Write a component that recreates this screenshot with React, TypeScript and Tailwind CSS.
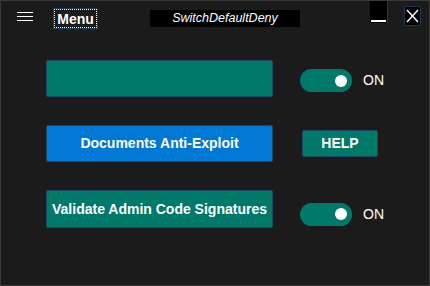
import React from 'react';

function Toggle() {
  return (
    <div className="flex items-center gap-[11px]">
      <div className="w-[52px] h-[23px] rounded-full bg-[#00786a] flex items-center justify-end pr-[5px]">
        <div className="w-3 h-3 rounded-full bg-white" />
      </div>
      <span className="text-[14px] text-white">ON</span>
    </div>
  );
}

export default function App() {
  return (
    <div
      className="w-[430px] h-[286px] bg-[#1b1b1b] border border-[#3a3a3a] flex flex-col overflow-hidden"
      style={{ fontFamily: '"Liberation Sans", Arial, sans-serif' }}
    >
      {/* title bar */}
      <div className="h-[36px] flex items-start shrink-0">
        <div className="ml-[16px] mt-[11px] w-4 flex flex-col gap-[3px]">
          <div className="h-px bg-white" />
          <div className="h-px bg-white" />
          <div className="h-px bg-white" />
        </div>
        <div className="ml-[20px] mt-[7px] h-[21px] w-[45px] border border-[#1d3a58] flex items-center justify-center outline-1 outline-dotted outline-white outline-offset-[-2px]">
          <span className="text-[14px] font-bold text-white leading-none">Menu</span>
        </div>
        <div className="ml-[52px] mt-[9px] h-[17px] w-[150px] bg-black flex items-center justify-center">
          <span className="text-[12.5px] italic text-white leading-none">SwitchDefaultDeny</span>
        </div>
        <div className="ml-[70px] -mt-px h-[23px] w-[18px] bg-black border-r border-[#1d3a58] flex items-end justify-center pb-[1px]">
          <div className="w-[15px] h-[2px] bg-white" />
        </div>
        <div className="ml-[16px] mt-[5px] h-[20px] w-[17px] bg-black border border-[#1d3a58] rounded-[2px] flex items-center justify-center">
          <svg width="13" height="14" viewBox="0 0 13 14">
            <path d="M1 1 L12 13 M12 1 L1 13" stroke="white" strokeWidth="1.4" fill="none" />
          </svg>
        </div>
      </div>

      {/* content */}
      <div className="flex flex-col pl-[45px] pt-[23px] gap-[28px]">
        <div className="flex items-center">
          <div className="w-[227px] h-[37px] rounded-[2px] bg-[#00786a] border border-[#1c4b68]" />
          <div className="ml-[27px] mt-[4px]">
            <Toggle />
          </div>
        </div>

        <div className="flex items-center">
          <div className="w-[227px] h-[37px] rounded-[2px] bg-[#0078d4] border border-[#1c4b68] flex items-center justify-center">
            <span className="text-[14px] font-bold text-white">Documents Anti-Exploit</span>
          </div>
          <div className="ml-[29px] w-[76px] h-[27px] rounded-[2px] bg-[#00786a] border border-[#1c4b68] flex items-center justify-center">
            <span className="text-[14px] font-bold text-white">HELP</span>
          </div>
        </div>

        <div className="flex items-center">
          <div className="w-[227px] h-[38px] rounded-[2px] bg-[#00786a] border border-[#1c4b68] flex items-center justify-center">
            <span className="text-[14px] font-bold text-white">Validate Admin Code Signatures</span>
          </div>
          <div className="ml-[27px] mt-[10px]">
            <Toggle />
          </div>
        </div>
      </div>
    </div>
  );
}
